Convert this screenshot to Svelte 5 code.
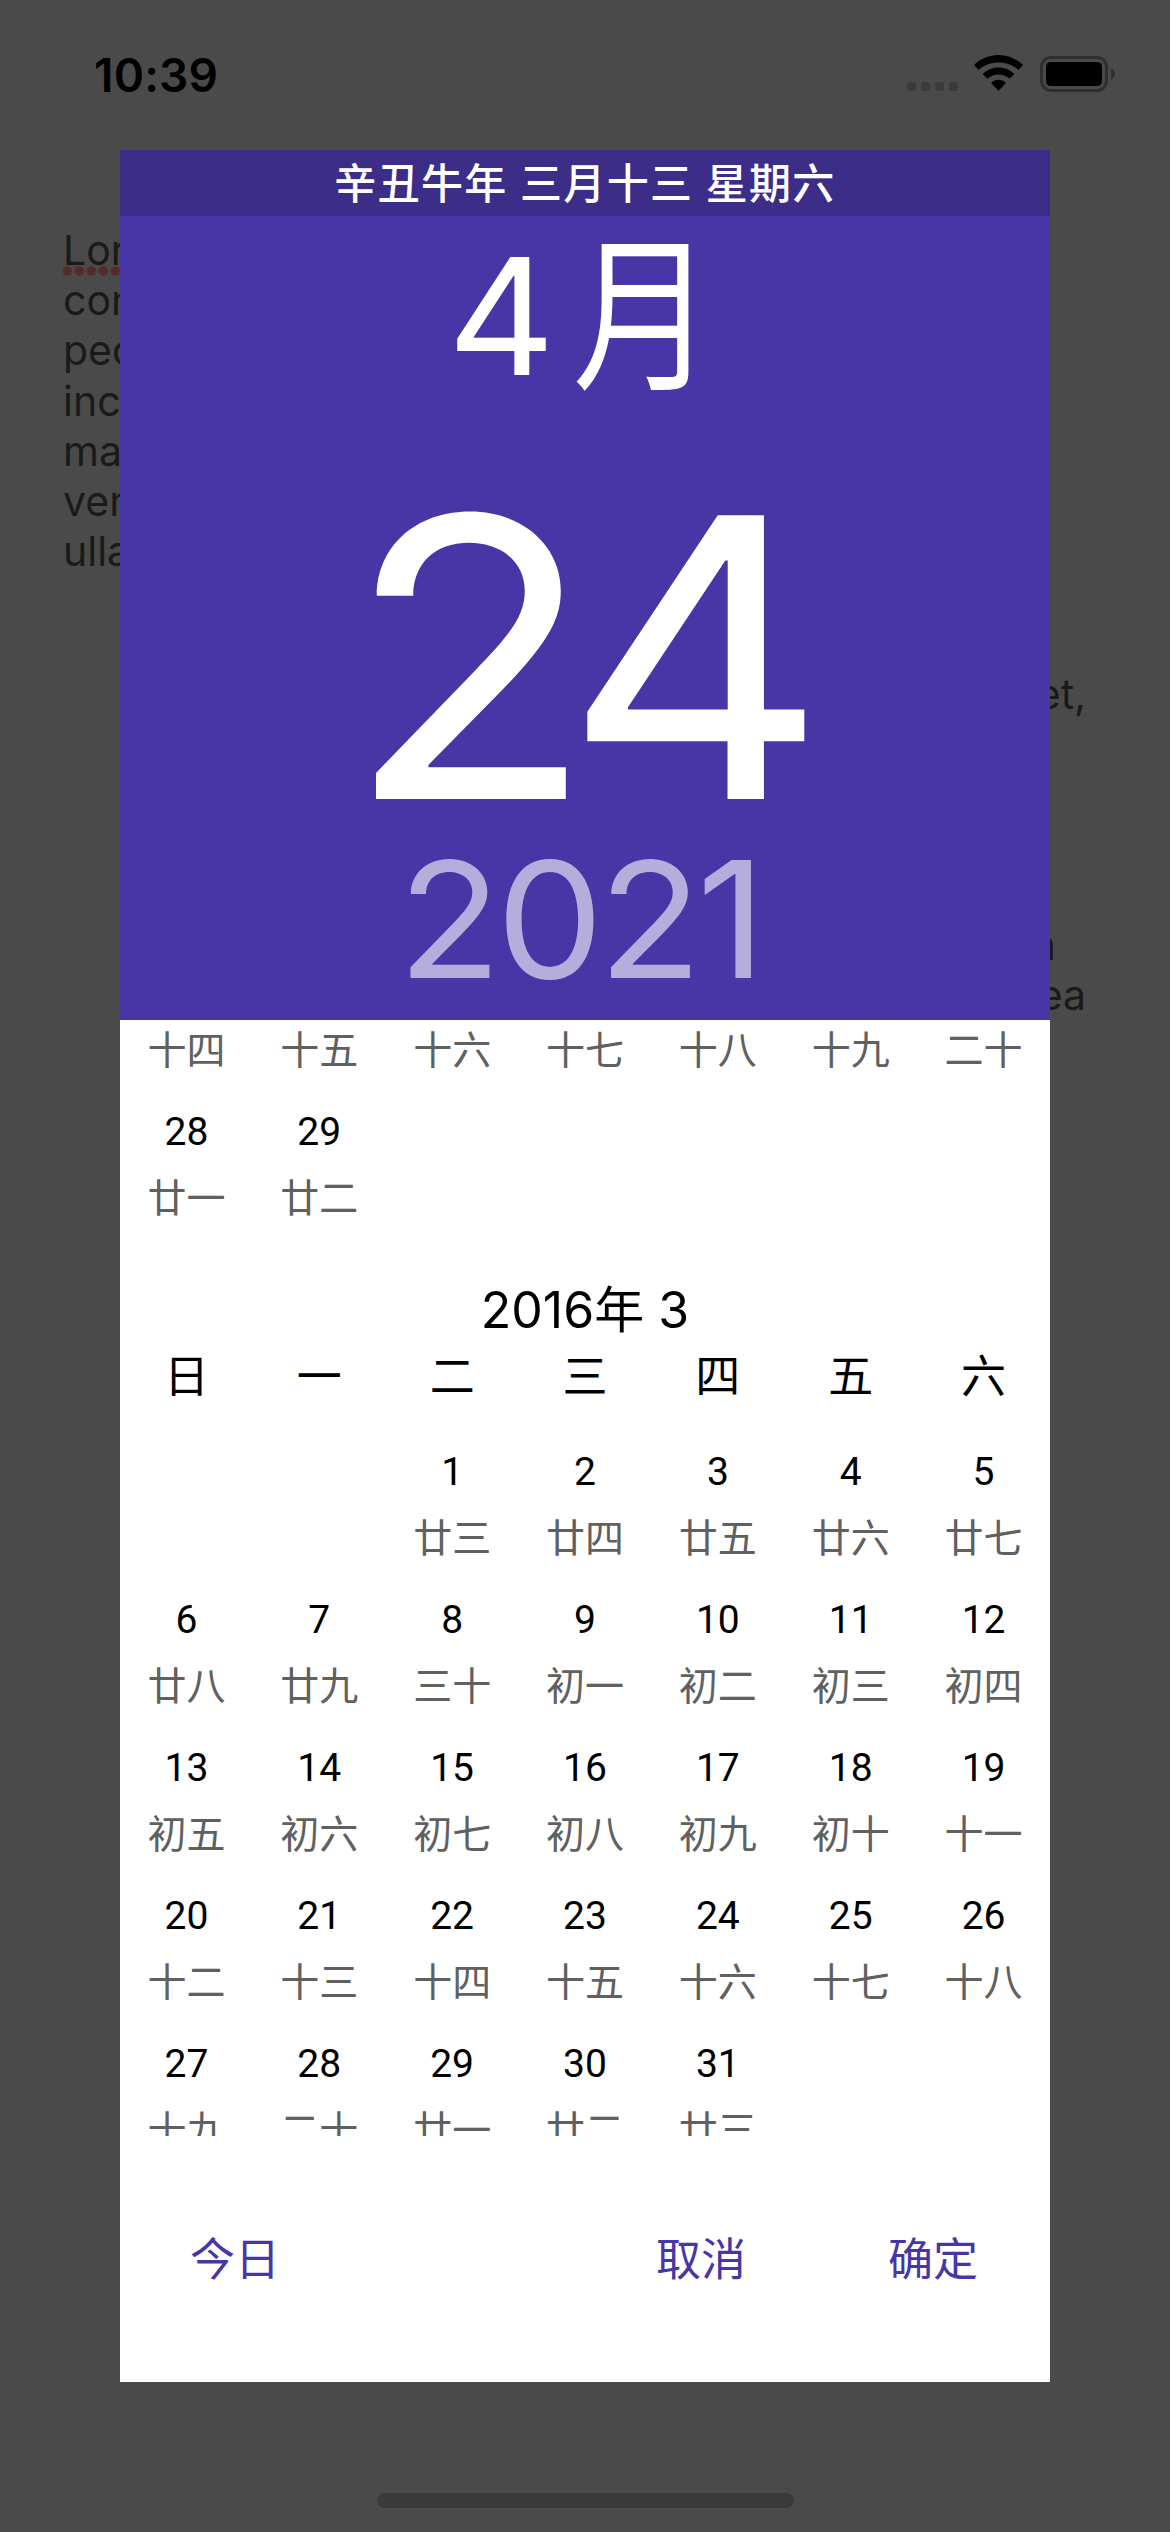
<script>
  const weekdays = ['日', '一', '二', '三', '四', '五', '六'];

  const leftNote = ['Lorem ipsum', 'consectetaur', 'pecu, sed do', 'incididunt ut', 'magna aliqua', 'veniam, quis', 'ullamco'];

  const blank = { day: '', lunar: '' };

  function buildWeeks(first, offset, lunars) {
    const cells = [
      ...Array(offset).fill(blank),
      ...lunars.map((lunar, i) => ({ day: first + i, lunar })),
    ];
    while (cells.length % 7) cells.push(blank);
    return Array.from({ length: cells.length / 7 }, (_, w) => cells.slice(w * 7, w * 7 + 7));
  }

  // The topmost week is scrolled halfway out, so only its lunar line is kept.
  const scrolledWeek = ['十四', '十五', '十六', '十七', '十八', '十九', '二十'];
  const february = buildWeeks(28, 0, ['廿一', '廿二']);
  const march = buildWeeks(1, 2, [
    '廿三', '廿四', '廿五', '廿六', '廿七', '廿八', '廿九', '三十',
    '初一', '初二', '初三', '初四', '初五', '初六', '初七', '初八', '初九', '初十',
    '十一', '十二', '十三', '十四', '十五', '十六', '十七', '十八', '十九', '二十',
    '廿一', '廿二', '廿三',
  ]);
</script>

{#snippet weekRows(weeks)}
  {#each weeks as week}
    <div class="week">
      {#each week as cell}
        <div class="cell">
          <span class="day">{cell.day}</span>
          <span class="lunar">{cell.lunar}</span>
        </div>
      {/each}
    </div>
  {/each}
{/snippet}

<div class="screen">
  <header class="status">
    <span class="clock">10:39</span>
    <div class="indicators">
      <div class="signal"><i></i><i></i><i></i><i></i></div>
      <svg class="wifi" viewBox="0 0 49 36" width="49" height="36">
        <path d="M24.5 0C33.8 0 42.3 3.6 48.600 9.600q.5.500 0 1l-3.700 3.800q-.5.500-1 0C38.700 9.900 32 7.500 24.500 7.500S10.300 9.900 5.100 14.400q-.5.500-1 0L.4 10.600q-.5-.5 0-1C6.700 3.600 15.200 0 24.500 0z" />
        <path d="M24.500 12.400c5.900 0 11.300 2.300 15.300 6q.5.500 0 1l-3.700 3.800q-.5.500-1 0c-2.800-2.300-6.500-3.700-10.600-3.700s-7.800 1.400-10.600 3.700q-.5.500-1 0l-3.700-3.800q-.5-.5 0-1c4-3.700 9.400-6 15.300-6z" />
        <path d="M24.500 24.700c2.700 0 5.100 1 6.900 2.700q.5.500 0 1l-6.300 6.800q-.6.600-1.200 0l-6.300-6.800q-.5-.5 0-1c1.800-1.700 4.200-2.700 6.900-2.700z" />
      </svg>
      <svg class="battery" viewBox="0 0 75 36" width="75" height="36">
        <rect class="shell" x="1.500" y="1.500" width="65" height="33" rx="9.500" />
        <rect x="6" y="6" width="56" height="24" rx="4.500" />
        <path class="nub" d="M71 12.500c2.500 1 4 3 4 5.500s-1.500 4.500-4 5.500z" />
      </svg>
    </div>
  </header>

  <div class="notes">
    <div class="note left">
      {#each leftNote as line, i}
        <p class:misspelt={i === 0}>{line}</p>
      {/each}
    </div>
    <div class="note right">
      <p>elit lamet,</p>
      <p class="later inset">exercitation</p>
      <p>aliquip ex ea</p>
    </div>
  </div>

  <div class="home"></div>

  <section class="dialog">
    <div class="lunar-date">辛丑牛年 三月十三 星期六</div>
    <div class="hero">
      <div class="month"><span class="numeral">4</span><span class="yue">月</span></div>
      <div class="date">24</div>
      <div class="year">2021</div>
    </div>
    <div class="calendar">
      <div class="week scrolled">
        {#each scrolledWeek as lunar}
          <div class="cell"><span class="lunar">{lunar}</span></div>
        {/each}
      </div>
      {@render weekRows(february)}
      <h2>2016<span>年</span> 3</h2>
      <div class="weekdays">
        {#each weekdays as name}<span>{name}</span>{/each}
      </div>
      {@render weekRows(march)}
    </div>
    <footer>
      <button class="today">今日</button>
      <button>取消</button>
      <button class="confirm">确定</button>
    </footer>
  </section>
</div>

<style>
  :global(body) {
    margin: 0;
  }

  .screen {
    position: relative;
    width: 1170px;
    height: 2532px;
    overflow: hidden;
    background: #4a4a4a;
    font-family: Inter, 'Noto Sans CJK SC', sans-serif;
    color: #000;
    display: flex;
    flex-direction: column;
  }

  .status {
    height: 146px;
    box-sizing: border-box;
    padding: 55px 55px 0 94px;
    display: flex;
    justify-content: space-between;
  }
  .clock {
    font-size: 46px;
    font-weight: 600;
    line-height: 40px;
    letter-spacing: 0.2px;
  }
  .indicators {
    display: flex;
    height: 37px;
  }
  .signal {
    display: flex;
    gap: 5px;
    align-items: flex-end;
    margin-right: 16px;
    padding-bottom: 1px;
  }
  .signal i {
    width: 9px;
    height: 9px;
    border-radius: 3px;
    background: #3b3b3b;
  }
  .wifi {
    margin-right: 17px;
  }
  .battery {
    margin-top: 1px;
  }
  .shell {
    fill: none;
    stroke: #2f2f2f;
    stroke-width: 3;
  }
  .nub {
    fill: #2f2f2f;
  }

  .notes {
    flex: 1;
    display: flex;
    justify-content: space-between;
    color: #1a1a1a;
    font-size: 41px;
    line-height: 50.2px;
  }
  .note p {
    margin: 0;
    white-space: nowrap;
  }
  .left {
    width: 200px;
    padding: 79px 0 0 61px;
    overflow: hidden;
  }
  .left p {
    padding-left: 2px;
  }
  .left .misspelt {
    padding-bottom: 4px;
    margin-bottom: -4px;
    background: radial-gradient(circle, #57292a 4.300px, transparent 5px) 0.400px 40.300px / 12px 12px repeat-x;
  }
  .right {
    padding: 523px 84px 0 0;
    text-align: right;
  }
  .right .later {
    margin-top: 200.800px;
  }
  .right .inset {
    padding-right: 30px;
  }

  .home {
    align-self: center;
    width: 417px;
    height: 15px;
    margin-bottom: 24px;
    border-radius: 8px;
    background: #3a3a3a;
  }

  .dialog {
    position: absolute;
    left: 120px;
    top: 150px;
    width: 930px;
    height: 2232px;
    background: #fff;
    display: flex;
    flex-direction: column;
  }
  .lunar-date {
    box-sizing: border-box;
    height: 66px;
    padding-top: 1px;
    line-height: 66px;
    background: #3c2d88;
    color: #fff;
    text-align: center;
    font-size: 42px;
    font-weight: 500;
    letter-spacing: 1.300px;
  }
  .hero {
    height: 804px;
    background: #4836a7;
    color: #fff;
    text-align: center;
    overflow: hidden;
  }
  .month {
    height: 200px;
    line-height: 200px;
    font-size: 162px;
    display: flex;
    justify-content: center;
  }
  .numeral {
    transform: scaleX(1.03);
  }
  .yue {
    font-size: 168px;
    transform: translateX(6px) scaleX(0.84);
  }
  .date {
    margin-top: 41px;
    line-height: 400px;
    font-size: 390px;
    letter-spacing: -24px;
    text-indent: -21px;
    transform: scaleX(1.05);
  }
  .year {
    margin-top: 2px;
    font-size: 162px;
    line-height: 120px;
    letter-spacing: -5px;
    text-indent: -11px;
    color: #b5aedc;
    transform: scaleX(1.05);
  }

  .calendar {
    height: 1116px;
    overflow: hidden;
  }
  .week,
  .weekdays {
    display: grid;
    grid-template-columns: repeat(7, 1fr);
    text-align: center;
  }
  .cell {
    height: 148px;
    display: flex;
    flex-direction: column;
    font-family: Roboto, 'Noto Sans CJK SC', sans-serif;
    font-size: 39px;
  }
  .scrolled {
    margin-top: -3px;
  }
  .scrolled .cell {
    height: 82px;
  }
  .day {
    height: 66px;
    line-height: 66px;
  }
  .lunar {
    height: 68px;
    line-height: 68px;
    color: #606060;
  }
  h2 {
    margin: 27px 0 0;
    font-size: 50px;
    line-height: 72px;
    font-weight: 400;
    text-align: center;
  }
  .weekdays {
    margin: 1px 0 32px;
    font-size: 45px;
    line-height: 60px;
  }

  footer {
    flex: 1;
    display: flex;
    align-items: flex-start;
    padding: 94px 72px 0 70px;
  }
  button {
    border: 0;
    padding: 0;
    background: none;
    color: #4836a7;
    font: inherit;
    font-size: 45px;
    line-height: 60px;
  }
  .today {
    margin-right: auto;
  }
  .confirm {
    margin-left: 142px;
  }
</style>
